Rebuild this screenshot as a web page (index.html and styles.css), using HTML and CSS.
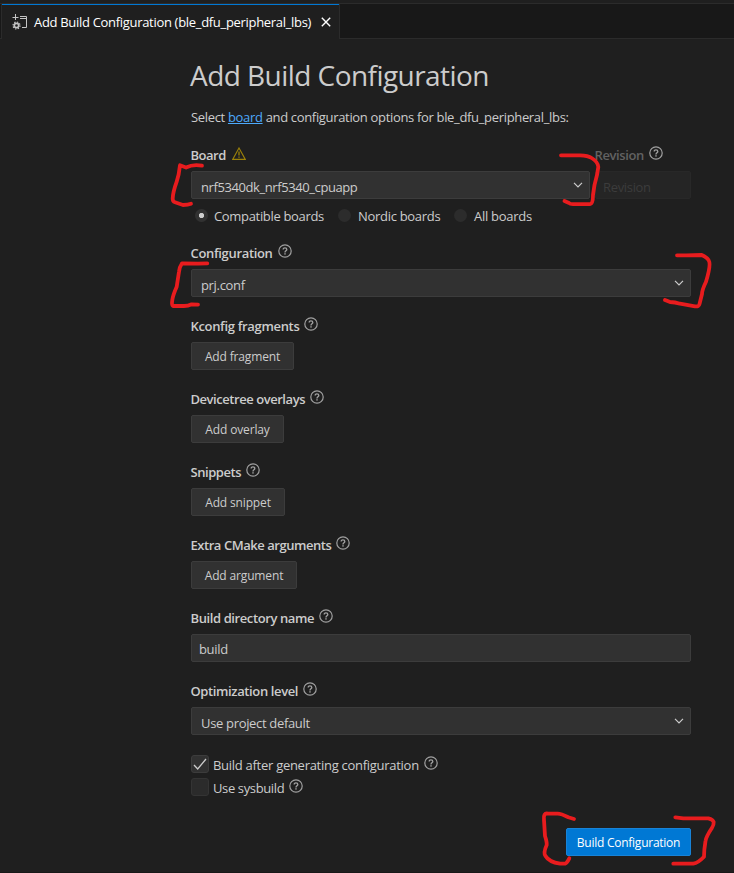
FILE: index.html
```
<!DOCTYPE html>
<html lang="en">
<head>
<meta charset="utf-8">
<title>Add Build Configuration</title>
<link rel="stylesheet" href="styles.css">
</head>
<body>
<svg class="defs" aria-hidden="true">
  <symbol id="help" viewBox="0 0 14 14">
    <circle cx="7" cy="7" r="6.2" fill="none" stroke="currentColor" stroke-width="1.2"/>
    <path d="M5.2 5.6C5.2 4.4 5.9 3.8 7 3.8s1.8.7 1.8 1.7c0 1.3-1.8 1.4-1.8 2.9" fill="none" stroke="currentColor" stroke-width="1.35"/>
    <rect x="6.3" y="9.2" width="1.4" height="1.4" fill="currentColor"/>
  </symbol>
  <symbol id="chevron" viewBox="0 0 10 6">
    <path d="M1 .8l4 4 4-4" fill="none" stroke="currentColor" stroke-width="1.2"/>
  </symbol>
</svg>
<div class="editor">
  <header class="tabs">
    <div class="tab">
      <svg class="tab-icon" viewBox="0 0 16 16">
        <g fill="none" stroke="#c5c5c5">
          <path d="M3.500 0v6M.5 3.500h6M8 2.500h6.500v11H10M8 4.500h6.500"/>
          <circle cx="4.500" cy="11.500" r="2.200" stroke-width="1.700"/>
          <circle cx="4.500" cy="11.500" r="3.500" stroke-width="1.200" stroke-dasharray="1.375 1.375"/>
        </g>
      </svg>
      <span class="tab-title">Add Build Configuration (ble_dfu_peripheral_lbs)</span>
      <svg class="close" viewBox="0 0 10 10"><path d="M.8.8l8.400 8.400M9.200.8L.8 9.200" stroke="#fff" stroke-width="1.400"/></svg>
    </div>
  </header>
  <main class="form">
    <h1>Add Build Configuration</h1>
    <p class="intro">Select <a href="#">board</a> and configuration options for ble_dfu_peripheral_lbs:</p>

    <section class="group board-group">
      <div class="columns">
        <div class="board-col">
          <div class="label"><span class="ls-board">Board</span><svg class="warn" viewBox="0 0 14 13"><path d="M7 1L13.300 12.400H.7z" fill="none" stroke="#9c8209" stroke-width="1.100"/><path d="M7 4.500v4M7 9.500v1.300" stroke="#9c8209" stroke-width="1.300"/></svg></div>
          <div class="field select"><span class="ls-board-name">nrf5340dk_nrf5340_cpuapp</span><svg class="chev"><use href="#chevron"/></svg></div>
        </div>
        <div class="rev-col">
          <div class="label"><span class="dim">Revision</span><svg class="help"><use href="#help"/></svg></div>
          <div class="field disabled">Revision</div>
        </div>
      </div>
      <div class="radios">
        <span class="radio on"></span><span class="r1">Compatible boards</span>
        <span class="radio"></span><span class="r2">Nordic boards</span>
        <span class="radio"></span><span class="r3">All boards</span>
      </div>
    </section>

    <section class="group">
      <div class="label"><span>Configuration</span><svg class="help"><use href="#help"/></svg></div>
      <div class="field select"><span>prj.conf</span><svg class="chev"><use href="#chevron"/></svg></div>
    </section>
    <section class="group">
      <div class="label"><span>Kconfig fragments</span><svg class="help"><use href="#help"/></svg></div>
      <button class="add w-fragment">Add fragment</button>
    </section>
    <section class="group">
      <div class="label"><span class="tight">Devicetree overlays</span><svg class="help"><use href="#help"/></svg></div>
      <button class="add w-overlay">Add overlay</button>
    </section>
    <section class="group">
      <div class="label"><span class="tight">Snippets</span><svg class="help"><use href="#help"/></svg></div>
      <button class="add w-snippet">Add snippet</button>
    </section>
    <section class="group">
      <div class="label"><span class="tight">Extra CMake arguments</span><svg class="help"><use href="#help"/></svg></div>
      <button class="add w-argument">Add argument</button>
    </section>
    <section class="group">
      <div class="label"><span class="ls-dir">Build directory name</span><svg class="help"><use href="#help"/></svg></div>
      <div class="field input">build</div>
    </section>
    <section class="group">
      <div class="label"><span class="ls-opt">Optimization level</span><svg class="help"><use href="#help"/></svg></div>
      <div class="field select"><span>Use project default</span><svg class="chev"><use href="#chevron"/></svg></div>
    </section>

    <div class="checks">
      <div class="check"><span class="box"><svg viewBox="0 0 16 16"><path d="M2 9l3.700 4L14 3" fill="none" stroke="#ccc" stroke-width="1.300"/></svg></span><span>Build after generating configuration</span><svg class="help"><use href="#help"/></svg></div>
      <div class="check"><span class="box"></span><span class="ls-sys">Use sysbuild</span><svg class="help"><use href="#help"/></svg></div>
    </div>
    <div class="actions"><button class="primary">Build Configuration</button></div>
  </main>
  <svg class="marks" viewBox="0 0 734 873">
    <path d="M202 165.700Q193 164 186 167.500L180 165.300Q179 175 176.700 181.700Q173 192 172.700 198.300Q172.500 201.500 175 202.300L183 205Q188 205 191 203.700"/>
    <path d="M561 155.300H580Q588 155.500 591.700 158Q598 162 598.300 167L597 175Q594 185 593 195Q593 204 590 204.200H573Q570 204 569 203L564.500 201"/>
    <path d="M207.300 263.300L198 263.700 182 263.300Q179.500 267 179 271.700L176.700 286.700Q173 295 172.300 300Q171.500 305 173 306H184Q188 306 191.700 304.300L198 304.700"/>
    <path d="M677 255.300H686L701.700 255Q708 258 709 261Q711 265 706 281.700Q702 290 702 294L699.500 304Q699 307 695 306.300L680 303.700Q675 302 670 302L665 300"/>
    <path d="M574 819L568.300 817.300Q560 813 556.700 813.700H548Q543 812.500 544 820L545 836Q547 842 546.700 845Q543 853 545.500 856Q549 862 560 863.700H565Q567 863 569.300 858.300"/>
    <path d="M675.300 817.300L683.300 818.300H708.300Q713 819.500 713.700 822Q714 825 711.700 828.300Q706 837 705.500 841Q704 850 704 856.700Q698 863 693.300 863.700H673.300"/>
  </svg>
</div>
</body>
</html>
```
FILE: styles.css
```
* { box-sizing: border-box; }
body {
  margin: 0;
  background: #1f1f1f;
  color: #ccc;
  font: 13px/18px "Open Sans", "Noto Sans", sans-serif;
  letter-spacing: -0.33px;
}
.defs { display: block; width: 0; height: 0; }
.editor {
  position: relative;
  height: 873px;
  overflow: hidden;
  border-bottom: 1px solid #181818;
}
.tabs {
  display: flex;
  height: 36px;
  margin-top: 3px;
  border-top: 1px solid #2b2b2b;
  border-bottom: 1px solid #2b2b2b;
  background: #181818;
  padding-left: 1px;
}
.tab {
  display: flex;
  align-items: center;
  width: 339px;
  height: 35px;
  padding-left: 10px;
  background: #1f1f1f;
  border: solid #2b2b2b;
  border-width: 0 1px;
  box-shadow: inset 0 1px #0078d4;
  color: #fff;
}
.tab-icon { width: 16px; height: 16px; }
.tab-title { width: 278px; margin-left: 6px; white-space: nowrap; letter-spacing: -0.31px; }
.close { width: 10px; height: 10px; margin-left: 9px; }

.form { width: 500px; margin-left: 191px; }
h1 {
  margin: 0 0 0 -1px;
  padding-top: 17px;
  font-size: 28px;
  line-height: 38px;
  font-weight: 400;
  letter-spacing: -0.55px;
}
.intro { margin: 14px 0 20px; white-space: nowrap; letter-spacing: -0.33px; }
a { color: #4daafc; }

.group { height: 73px; }
.board-group { height: 98px; }
.columns { display: flex; gap: 5px; }
.board-col { width: 399px; }
.rev-col { width: 96px; }
.label {
  display: flex;
  align-items: center;
  height: 18px;
  margin-bottom: 7px;
  font-weight: 600;
}
.label span { margin-left: -0.5px; }
.help { width: 14px; height: 14px; margin: -4px 0 0 5px; color: #a0a0a0; flex: none; }
.warn { width: 14px; height: 13px; margin: -3px 0 0 6px; }
.dim { color: #626262; letter-spacing: -0.4px; }
.field {
  display: flex;
  align-items: center;
  height: 28px;
  border: 1px solid #3c3c3c;
  border-radius: 2px;
  background: #313131;
}
.select { justify-content: space-between; padding: 4px 6px 0 9px; }
.chev { width: 10px; height: 6px; margin-top: -4px; }
.input { padding: 2px 0 0 7px; }
.disabled { padding: 3px 0 0 7px; background: #252525; border-color: #282828; color: #3c3c3c; }
.radios { display: flex; align-items: center; height: 18px; margin-top: 8px; white-space: nowrap; }
.radio {
  width: 13px;
  height: 13px;
  margin: -1px 7px 0 0;
  border-radius: 50%;
  background: #2c2c2c;
}
.radios .radio:first-child { margin: -1px 6px 0 4px; }
.on { background: radial-gradient(circle, #ccc 2.2px, #313131 3px); }
.r1 { width: 124px; }
.r2 { width: 96px; letter-spacing: -0.3px; }
.r3 { letter-spacing: -0.28px; }

button {
  display: block;
  height: 28px;
  padding: 2px 0 0;
  border: 1px solid #3c3c3c;
  border-radius: 2px;
  background: #313131;
  color: #ccc;
  font: 12px/16px "Open Sans", "Noto Sans", sans-serif;
  letter-spacing: -0.15px;
}
.w-fragment { width: 103px; }
.w-overlay { width: 93px; }
.w-snippet { width: 94px; }
.w-argument { width: 106px; }
.checks { margin-top: -2px; }
.check { display: flex; align-items: center; height: 23px; white-space: nowrap; letter-spacing: -0.28px; }
.box {
  width: 18px;
  height: 18px;
  margin: -2px 4px 0 0;
  border: 1px solid #343434;
  border-radius: 3px;
  background: #2b2b2b;
}
.box:has(svg) { background: #313131; border-color: #3c3c3c; }
.box svg { display: block; width: 16px; height: 16px; }
.actions { display: flex; justify-content: flex-end; margin-top: 29px; }
.primary { width: 125px; padding-top: 1px; background: #0078d4; border-color: #1883d7; color: #fff; letter-spacing: -0.25px; }

.tight { letter-spacing: -0.45px; }
.ls-board { letter-spacing: -0.5px; }
.ls-board-name { letter-spacing: -0.41px; }
.ls-dir { letter-spacing: -0.4px; }
.ls-opt { letter-spacing: -0.38px; }
.ls-sys { letter-spacing: -0.37px; }

.marks {
  position: absolute;
  inset: 0;
  width: 734px;
  height: 873px;
  pointer-events: none;
  fill: none;
  stroke: #e81c1e;
  stroke-width: 3.8;
  stroke-linecap: round;
  stroke-linejoin: round;
}
```
